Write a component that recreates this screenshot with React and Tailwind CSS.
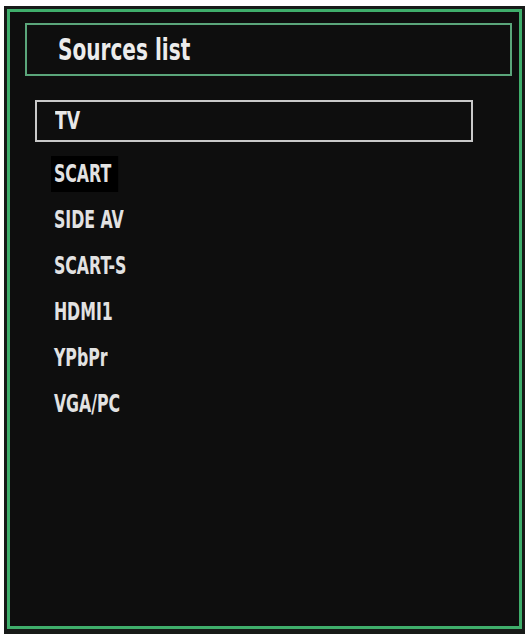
import React from 'react'

const sources = ['SCART', 'SIDE AV', 'SCART-S', 'HDMI1', 'YPbPr', 'VGA/PC']

const font = { fontFamily: '"DejaVu Sans Condensed", "DejaVu Sans", sans-serif' }

const App = () => {
    return (
        <div className='w-[529px] h-[634px] bg-white pl-[4px] pt-[6px] overflow-hidden' style={font}>
            <div className='w-[521px] h-[628px] bg-[#171a18] pt-[3px] px-[3px] pb-[5px]'>
                <div className='h-full border-[3px] border-[#3fae6b] bg-[#0e0e0e] pt-[11px] pl-[15px]'>

                    {/* header */}
                    <div className='w-[487px] h-[53px] border-2 border-[#5aa57a] flex items-center pl-[31px]'>
                        <span className='inline-block origin-left scale-x-[0.72] text-[31px] font-bold text-[#ececec]'>Sources list</span>
                    </div>

                    {/* selected source */}
                    <div className='ml-[10px] mt-[24px] w-[438px] h-[42px] border-2 border-[#c9c9c9] flex items-center pl-[18px]'>
                        <span className='inline-block origin-left scale-x-[0.8] text-[24px] font-bold text-[#e8e8e8]'>TV</span>
                    </div>

                    <div className='mt-[9px] ml-[26px] flex flex-col'>
                        {sources.map((s, i) => (
                            <div key={i} className='h-[46px] flex items-center'>
                                <span className={'inline-block origin-left scale-x-[0.73] text-[24px] font-bold text-[#e2e2e2] pl-[4px] pr-[10px] ' + (i === 0 ? 'bg-black' : '')}>{s}</span>
                            </div>
                        ))}
                    </div>

                </div>
            </div>
        </div>
    )
}

export default App
